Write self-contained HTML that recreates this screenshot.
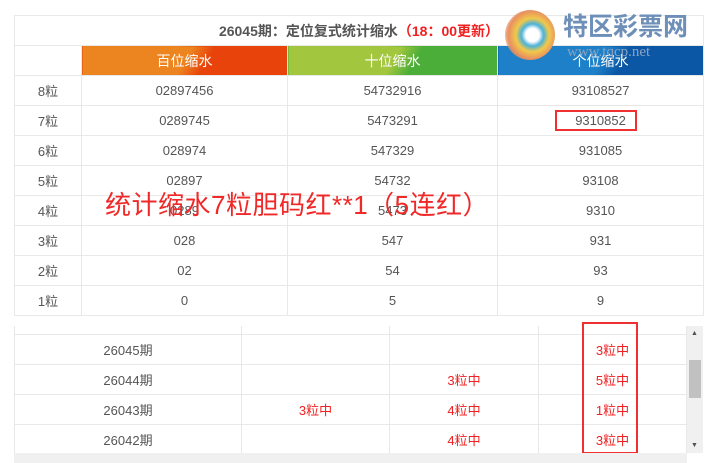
<!DOCTYPE html>
<html><head><meta charset="utf-8"><style>
body{margin:0;width:705px;height:463px;background:#fff;position:relative;overflow:hidden;font-family:"Liberation Sans","Noto Sans CJK SC",sans-serif;color:#555;font-size:13px}
.a{position:absolute}
table{border-collapse:collapse;position:absolute}
td{border:1px solid #e8e8e8;text-align:center;padding:0}
.r{color:#f02020}
</style></head><body>
<table style="left:14px;top:15px;width:690px">
<tr style="height:30px"><td colspan="4" style="font-weight:bold;font-size:14px;color:#555">26045期：定位复式统计缩水<span class="r">（18：00更新）</span></td></tr>
<tr style="height:30px;color:#fff;font-size:14px"><td style="width:66px"></td>
<td style="width:205px;background:linear-gradient(120deg,#ec8420 50%,#e8430a 60%)">百位缩水</td>
<td style="width:209px;background:linear-gradient(120deg,#a3c63f 50%,#4aae38 60%)">十位缩水</td>
<td style="background:linear-gradient(120deg,#1e80c8 50%,#0b57a6 60%)">个位缩水</td></tr>
<tr style="height:30px"><td>8粒</td><td>02897456</td><td>54732916</td><td>93108527</td></tr>
<tr style="height:30px"><td>7粒</td><td>0289745</td><td>5473291</td><td>9310852</td></tr>
<tr style="height:30px"><td>6粒</td><td>028974</td><td>547329</td><td>931085</td></tr>
<tr style="height:30px"><td>5粒</td><td>02897</td><td>54732</td><td>93108</td></tr>
<tr style="height:30px"><td>4粒</td><td>0289</td><td>5473</td><td>9310</td></tr>
<tr style="height:30px"><td>3粒</td><td>028</td><td>547</td><td>931</td></tr>
<tr style="height:30px"><td>2粒</td><td>02</td><td>54</td><td>93</td></tr>
<tr style="height:30px"><td>1粒</td><td>0</td><td>5</td><td>9</td></tr>
</table>
<div class="a" style="left:555px;top:110px;width:78px;height:17px;border:2px solid #f03030"></div>
<div class="a" style="left:105px;top:185px;font-size:26px;letter-spacing:0.5px;color:#f02828;white-space:nowrap">统计缩水7粒胆码红**1（5连红）</div>
<div class="a" style="left:505px;top:10px;width:50px;height:50px;border-radius:50%;background:radial-gradient(circle at 55% 50%,#fff 18%,#4bb2d8 30%,#f1c94a 45%,#e89060 65%,rgba(230,150,100,.4) 80%,transparent 82%)"></div>
<div class="a" style="left:563px;top:12px;font-size:25px;font-weight:bold;color:#6d8fb8;white-space:nowrap;line-height:30px">特区彩票网</div>
<div class="a" style="left:567px;top:44px;font-size:15px;color:#8aa2c0;font-family:'Liberation Serif',serif;white-space:nowrap">www.tqcp.net</div>
<div class="a" style="left:14px;top:326px;width:673px;height:127px;overflow:hidden">
<table style="left:0;top:-2px;width:673px;font-size:13px">
<tr style="height:10px"><td style="width:226px;border-top:none"></td><td style="width:147px;border-top:none"></td><td style="width:148px;border-top:none"></td><td style="border-top:none"></td></tr>
<tr style="height:30px"><td>26045期</td><td></td><td></td><td class="r">3粒中</td></tr>
<tr style="height:30px"><td>26044期</td><td></td><td class="r">3粒中</td><td class="r">5粒中</td></tr>
<tr style="height:30px"><td>26043期</td><td class="r">3粒中</td><td class="r">4粒中</td><td class="r">1粒中</td></tr>
<tr style="height:30px"><td>26042期</td><td></td><td class="r">4粒中</td><td class="r">3粒中</td></tr>
</table></div>
<div class="a" style="left:582px;top:322px;width:52px;height:128px;border:2px solid #f03030"></div>
<div class="a" style="left:687px;top:326px;width:16px;height:127px;background:#f0f0f0"></div>
<div class="a" style="left:689px;top:360px;width:12px;height:38px;background:#c1c1c1"></div>
<div class="a" style="left:691px;top:330px;font-size:7px;color:#505050">▲</div>
<div class="a" style="left:691px;top:442px;font-size:7px;color:#505050">▼</div>
<div class="a" style="left:14px;top:453px;width:673px;height:10px;background:#f0f0f0"></div>
</body></html>
